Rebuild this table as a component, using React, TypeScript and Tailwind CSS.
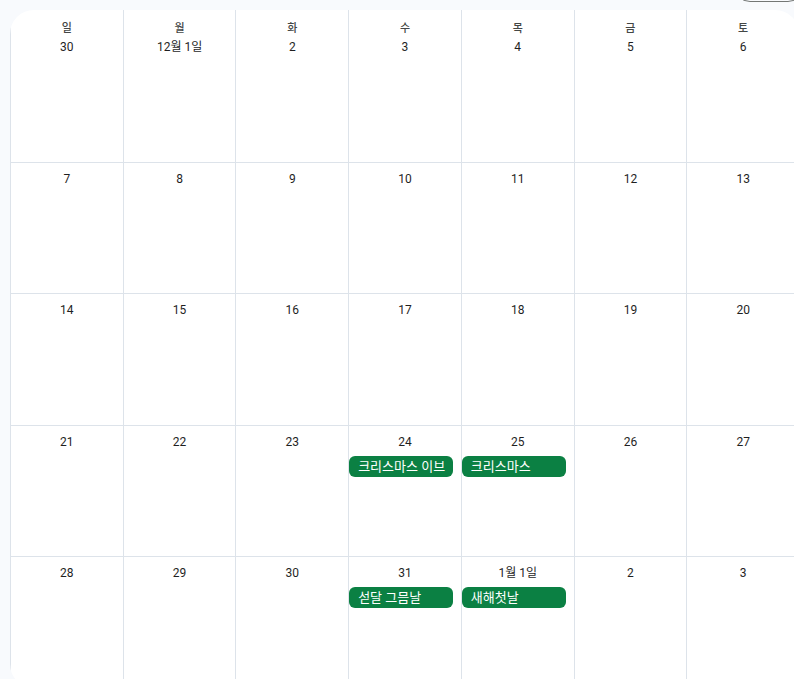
import React from "react";

// Month grid for December, as the calendar shows it: a white card with
// hairline cells, the weekday names folded into the first week, and the
// holiday chips sitting under their dates.

type Day = { label: string; events?: string[] };

const WEEKDAYS = ["일", "월", "화", "수", "목", "금", "토"];

const WEEKS: Day[][] = [
  [{ label: "30" }, { label: "12월 1일" }, { label: "2" }, { label: "3" }, { label: "4" }, { label: "5" }, { label: "6" }],
  [{ label: "7" }, { label: "8" }, { label: "9" }, { label: "10" }, { label: "11" }, { label: "12" }, { label: "13" }],
  [{ label: "14" }, { label: "15" }, { label: "16" }, { label: "17" }, { label: "18" }, { label: "19" }, { label: "20" }],
  [
    { label: "21" },
    { label: "22" },
    { label: "23" },
    { label: "24", events: ["크리스마스 이브"] },
    { label: "25", events: ["크리스마스"] },
    { label: "26" },
    { label: "27" },
  ],
  [
    { label: "28" },
    { label: "29" },
    { label: "30" },
    { label: "31", events: ["섣달 그믐날"] },
    { label: "1월 1일", events: ["새해첫날"] },
    { label: "2" },
    { label: "3" },
  ],
];

function Chip({ title }: { title: string }) {
  return (
    <div className="mt-[4px] mr-[8px] flex h-[21px] items-center overflow-hidden whitespace-nowrap rounded-[6px] bg-[#0b8043] pl-[9px] text-[13px] leading-[21px] text-white">
      {title}
    </div>
  );
}

function Cell({ day, weekday, first }: { day: Day; weekday?: string; first: boolean }) {
  return (
    <div
      className={`flex min-w-0 flex-col border-l border-[#dde3ea] ${
        first ? "pt-[9px]" : "border-t pt-[6px]"
      }`}
    >
      {weekday && (
        <div className="h-[18px] pt-[1px] text-center text-[11px] font-medium leading-[18px] text-[#444746]">
          {weekday}
        </div>
      )}
      <div className="h-[20px] text-center text-[12px] leading-[20px] text-[#1f1f1f]">
        {day.label}
      </div>
      {day.events?.map((e) => <Chip key={e} title={e} />)}
    </div>
  );
}

export default function App() {
  return (
    <div
      className="h-[679px] w-full overflow-hidden bg-[#f8fafd]"
      style={{ fontFamily: 'Roboto, "Noto Sans CJK KR", "Noto Sans", sans-serif' }}
    >
      {/* the bottom of the toolbar's outlined control just shows above the card */}
      <div className="flex h-[10px] justify-end">
        <div className="-mr-[10px] -mt-[34px] h-[36px] w-[70px] shrink-0 rounded-[16px] border border-[#747775]" />
      </div>

      <div className="ml-[10px] w-[789px] overflow-hidden rounded-[24px] bg-white">
        <div className="grid grid-cols-7 grid-rows-[152px_131px_132px_131px_132px]">
          {WEEKS.map((week, w) =>
            week.map((day, i) => (
              <Cell
                key={`${w}-${i}`}
                day={day}
                weekday={w === 0 ? WEEKDAYS[i] : undefined}
                first={w === 0}
              />
            ))
          )}
        </div>
      </div>
    </div>
  );
}
